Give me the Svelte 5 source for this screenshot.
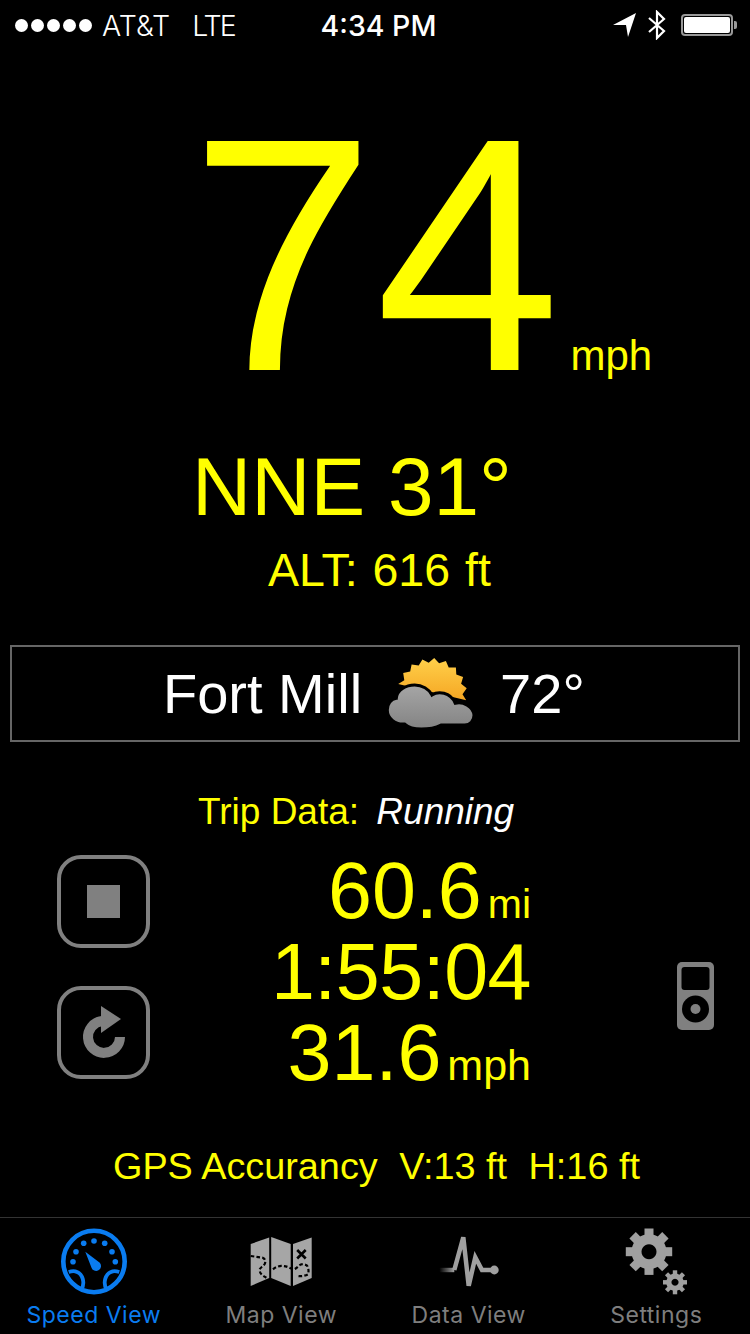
<script>
  const dots = [0, 1, 2, 3, 4];
  const gauge = [[16,23.7],[23.7,15.3],[34,13],[44.7,15.3],[52,23.7],[55.3,33.7],[13,33.7]];
  const teeth = [0, 45, 90, 135, 180, 225, 270, 315];

  // Scalloped sun rim, swept from the lower left round to the lower right.
  const sunPoints = (() => {
    const cx = 46, cy = 36, pts = [];
    const spikes = 9;
    const from = 195, to = 372;
    for (let i = 0; i <= spikes * 2; i++) {
      const a = ((from + ((to - from) * i) / (spikes * 2)) * Math.PI) / 180;
      const r = i % 2 ? 30.5 : 35;
      pts.push(`${(cx + r * Math.cos(a)).toFixed(1)},${(cy + r * Math.sin(a)).toFixed(1)}`);
    }
    return pts.join(" ");
  })();
  const cloudPath = "M10.3 41.3 C11 33 20 28 28.7 28 C36 28 43 32 46 38 C49 36 54 35.5 58 36.3 C63 37.5 67 41 69.3 46.3 C77 44.5 87 49 88 58 C88 64 84 68 78.7 68 L55 68 C49 71 41 72 35.3 72 C29 72 23 71 18.7 67 C9 68 1.3 61 1.3 53 C1.3 47 5 42 10.3 41.3 Z";
</script>

<div class="page">
  <header class="status">
    <div class="st-left">
      <div class="dots">{#each dots as d}<i></i>{/each}</div>
      <span>AT&amp;T</span><span class="lte">LTE</span>
    </div>
    <div class="st-time">4:34 PM</div>
    <div class="st-right">
      <svg width="23" height="24" viewBox="0 0 23 24"><path d="M0 12 L23 0 L15 24 L13 12 Z" fill="#fff"/></svg>
      <svg class="bt" width="22" height="30" viewBox="0 0 22 30"><path d="M3 8 L18 21 L11 28 V2 L18 9 L3 22" fill="none" stroke="#fff" stroke-width="2.2"/></svg>
      <div class="battery"><div class="cell"></div></div><div class="nub"></div>
    </div>
  </header>

  <section class="speed">
    <span class="big">74</span><span class="unit">mph</span>
  </section>
  <div class="heading">NNE 31°</div>
  <div class="alt">ALT: 616 ft</div>

  <section class="weather">
    <span>Fort Mill</span>
    <svg width="90" height="72" viewBox="0 0 90 72">
      <defs>
        <linearGradient id="sun" x1="0" y1="0" x2="0" y2="1"><stop offset="0" stop-color="#ffd04a"/><stop offset="1" stop-color="#f5a623"/></linearGradient>
        <linearGradient id="cloud" x1="0" y1="0" x2="0" y2="1"><stop offset="0" stop-color="#a6a6a6"/><stop offset="1" stop-color="#838383"/></linearGradient>
      </defs>
      <polygon points={sunPoints} fill="url(#sun)"/>
      <path d={cloudPath} fill="url(#cloud)" stroke="#000" stroke-width="3"/>
    </svg>
    <span class="temp">72°</span>
  </section>

  <div class="trip-title">Trip Data: <em>Running</em></div>

  <section class="trip">
    <div class="controls">
      <button class="ctl" aria-label="Stop"><span class="stop"></span></button>
      <button class="ctl" aria-label="Reset">
        <svg width="85" height="85" viewBox="4 4 85 85">
          <path d="M63 51 A16 16 0 1 1 45 35" fill="none" stroke="#808080" stroke-width="10"/>
          <path d="M44 20 L64 33 L44 47 Z" fill="#808080"/>
        </svg>
      </button>
    </div>
    <div class="readouts">
      <div class="r">60.6<small>mi</small></div>
      <div class="r r2">1:55:04</div>
      <div class="r">31.6<small class="m">mph</small></div>
    </div>
    <svg class="ipod" width="37" height="68" viewBox="0 0 37 68">
      <rect width="37" height="68" rx="5" fill="#808080"/>
      <rect x="4.5" y="5" width="28" height="23" rx="3" fill="#000"/>
      <circle cx="18.5" cy="47" r="13.5" fill="#000"/>
      <circle cx="18.5" cy="47" r="5" fill="#808080"/>
    </svg>
  </section>

  <div class="gps"><span>GPS Accurancy</span><span>V:13 ft</span><span>H:16 ft</span></div>

  <nav class="tabs">
    <div class="tab active">
      <svg width="68" height="68" viewBox="0 0 68 68">
        <g fill="none" stroke="#0a7cf0">
          <circle cx="34" cy="33.5" r="30.7" stroke-width="4.6"/>
          <path d="M8.7 44 C12 43 15 43 17 44 C22 46 26 54 21 63" stroke-width="3.8"/>
          <path d="M59.3 44 C56 43 53 43 51 44 C46 46 42 54 47 63" stroke-width="3.8"/>
        </g>
        <g fill="#0a7cf0">
          {#each gauge as g}<circle cx={g[0]} cy={g[1]} r="2.8"/>{/each}
          <path d="M25.3 23.7 L39.8 34.8 A4.9 4.9 0 1 1 31.4 39.4 Z"/>
        </g>
      </svg>
      <span>Speed View</span>
    </div>
    <div class="tab">
      <svg width="68" height="68" viewBox="0 0 68 68">
        <g transform="translate(3.7 9)">
          <g fill="#a6a6a6">
            <path d="M0 7 L18.5 .5 V41 L0 49 Z"/><path d="M20.5 0 L40 7 V49 L20.5 41 Z"/><path d="M42.3 7 L61 .5 V41 L42.3 49 Z"/>
          </g>
          <g fill="none" stroke="#000">
            <path d="M0 19 L12 20.7 C15 22 15 25 14 27 C12 30 8 31 9 34 C10 38 13 39 15.7 40.7 M22.3 32.3 C25 30 29 28.5 32 29 C36 29 39 31 42 32.3 C45 33 48 28 50.7 27.3 C54 27 57 28 57.3 30.7 C58 33 58 35 57.3 37.3 C54 39 50 39.5 47.3 39" stroke-width="2.2" stroke-dasharray="3.6 2.2"/>
            <path d="M46.5 13 L55 21.5 M55 13 L46.5 21.5" stroke-width="2.6"/>
          </g>
        </g>
      </svg>
      <span>Map View</span>
    </div>
    <div class="tab">
      <svg width="68" height="68" viewBox="0 0 68 68">
        <defs><linearGradient id="fade" x1="0" y1="0" x2="1" y2="0"><stop offset="0" stop-color="#a0a0a0" stop-opacity="0"/><stop offset="1" stop-color="#a0a0a0"/></linearGradient></defs>
        <path d="M19.3 42 L28.3 9.3 L33.7 57.7 L40.3 29.3 L47 42 H59" fill="none" stroke="#a0a0a0" stroke-width="4.5" stroke-linejoin="miter" stroke-miterlimit="3"/>
        <rect x="4.3" y="39.8" width="15" height="4.4" fill="url(#fade)"/>
        <circle cx="59.3" cy="42" r="4.4" fill="#a0a0a0"/>
      </svg>
      <span>Data View</span>
    </div>
    <div class="tab">
      <svg width="68" height="68" viewBox="0 0 68 68">
        <g fill="#a0a0a0">
          <path fill-rule="evenodd" d="M27 6.2 A17.5 17.5 0 1 1 26.99 6.2 Z M27 16.2 A7.5 7.5 0 1 0 27.01 16.2 Z"/>
          {#each teeth as t}<rect x="22.5" y="0.5" width="9" height="8" transform="rotate({t} 27 23.7)"/>{/each}
          <path fill-rule="evenodd" d="M53 45.6 A8.7 8.7 0 1 1 52.99 45.6 Z M53 50.8 A3.5 3.5 0 1 0 53.01 50.8 Z"/>
          {#each teeth as t}<rect x="50.8" y="42.3" width="4.4" height="5" transform="rotate({t} 53 54.3)"/>{/each}
        </g>
      </svg>
      <span>Settings</span>
    </div>
  </nav>
</div>

<style>
  :global(body) { margin: 0; background: #000; }
  .page {
    width: 750px; height: 1334px; background: #000; overflow: hidden;
    display: flex; flex-direction: column; color: #ff0;
    font-family: "Liberation Sans", Arial, sans-serif;
  }
  .status {
    height: 50px; display: grid; grid-template-columns: 1fr auto 1fr; align-items: center;
    color: #fff; font-family: Inter, "Liberation Sans", sans-serif; font-size: 28.5px;
    padding: 0 13px 0 15px; box-sizing: border-box;
  }
  .st-left { display: flex; align-items: center; font-weight: 300; }
  .dots { display: flex; gap: 3px; margin-right: 10px; }
  .dots i { width: 13px; height: 13px; border-radius: 50%; background: #fff; display: block; }
  .lte { margin-left: 22px; letter-spacing: -2px; }
  .st-time { font-weight: 500; margin-left: 5px; }
  .st-right { display: flex; align-items: center; justify-content: flex-end; }
  .bt { margin: 0 13px 0 10px; }
  .battery { width: 52px; height: 22px; box-sizing: border-box; border: 2px solid #999; border-radius: 4px; padding: 1px; }
  .cell { width: 100%; height: 100%; background: #fff; border-radius: 2px; }
  .nub { width: 3px; height: 8px; background: #999; border-radius: 0 2px 2px 0; margin-left: 1px; }
  .speed { display: flex; align-items: baseline; padding: 15px 0 0 190px; height: 380px; box-sizing: border-box; }
  .big { font-size: 333px; line-height: 380px; }
  .unit { font-size: 42px; margin-left: 10px; }
  .heading { font-size: 82px; line-height: 90px; padding-left: 192px; margin-top: 12px; }
  .alt { font-size: 46.5px; line-height: 52px; padding-left: 268px; margin-top: 12px; word-spacing: 2px; }
  .weather {
    margin: 49px 10px 0; height: 97px; border: 2px solid #666; box-sizing: border-box;
    display: flex; align-items: center; color: #fff; font-size: 56px; padding-left: 151px;
  }
  .weather svg { margin: 0 24px 2px; }
  .trip-title { font-size: 37px; line-height: 42px; padding-left: 198px; margin-top: 49px; }
  .trip-title em { color: #fff; margin-left: 7px; }
  .trip { display: flex; margin-top: 22px; height: 224px; }
  .controls { display: flex; flex-direction: column; gap: 38px; margin-left: 57px; }
  .ctl {
    width: 93px; height: 93px; box-sizing: border-box; background: none; padding: 0; border: 4px solid #808080;
    border-radius: 24px; display: flex; align-items: center; justify-content: center;
  }
  .stop { display: block; width: 33px; height: 33px; background: #808080; }
  .readouts { width: 381px; margin-top: -5px; display: flex; flex-direction: column; align-items: flex-end; }
  .r { font-size: 79px; line-height: 81px; white-space: nowrap; }
  .r2 { letter-spacing: -.5px; }
  .r small { font-size: 41px; line-height: 0; margin-left: 6px; }
  .r small.m { font-size: 43px; }
  .ipod { margin: 107px 0 0 146px; }
  .gps { display: flex; gap: 21.5px; font-size: 37.8px; line-height: 42px; padding-left: 113px; margin-top: 66px; }
  .tabs {
    margin-top: auto; height: 117px; border-top: 1px solid #333; box-sizing: border-box;
    display: grid; grid-template-columns: repeat(4, 1fr);
    font-family: Inter, "Liberation Sans", sans-serif; font-size: 23px; color: #7e7e7e;
  }
  .tab { display: flex; flex-direction: column; align-items: center; padding-top: 10px; letter-spacing: .5px; }
  .tab span { margin-top: 5px; line-height: 28px; }
  .active { color: #0a7cf0; }
</style>
